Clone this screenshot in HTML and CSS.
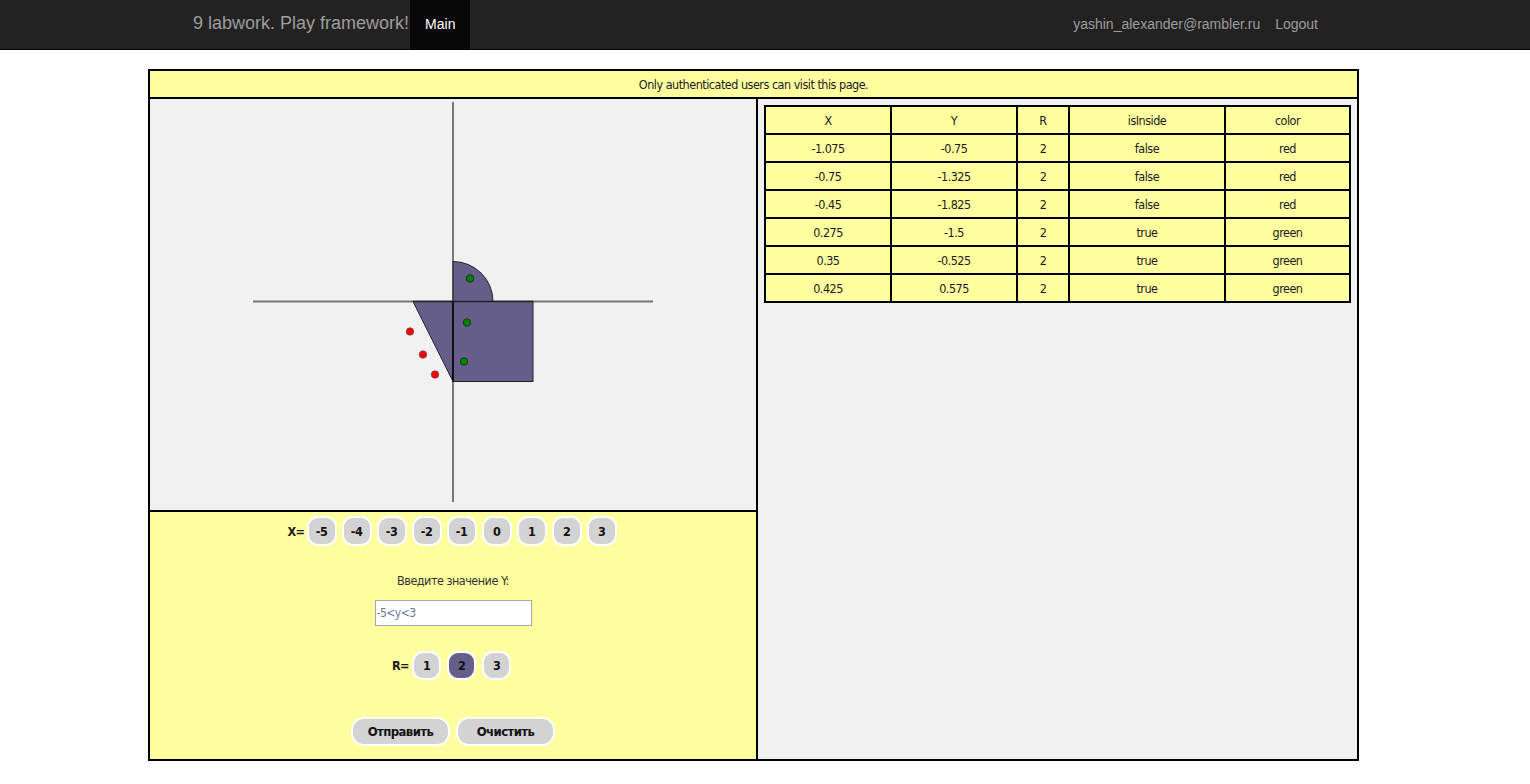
FILE: index.html
```html
<!DOCTYPE html>
<html lang="ru">
<head>
<meta charset="utf-8">
<title>9 labwork. Play framework!</title>
<link rel="stylesheet" href="styles.css">
</head>
<body>
<nav class="navbar">
  <div class="nav-inner">
    <div class="nav-left">
      <a class="brand" href="#">9 labwork. Play framework!</a>
      <a class="nav-link active" href="#">Main</a>
    </div>
    <div class="nav-right">
      <span class="nav-text">yashin_alexander@rambler.ru</span>
      <a class="nav-text logout" href="#">Logout</a>
    </div>
  </div>
</nav>

<div class="frame">
  <div class="frame-head">Only authenticated users can visit this page.</div>
  <div class="frame-body">
    <div class="left-col">
      <div class="graph-area">
        <svg class="graph" width="400" height="400" viewBox="0 0 400 400">
          <line x1="0" y1="199.5" x2="400" y2="199.5" stroke="#777" stroke-width="2"/>
          <line x1="200" y1="0" x2="200" y2="400" stroke="#777" stroke-width="2"/>
          <path d="M200 199.5 L200 159.5 A40 40 0 0 1 240 199.5 Z" fill="#665e8a" stroke="#222" stroke-width="1"/>
          <rect x="200" y="199.5" width="80" height="80" fill="#665e8a" stroke="#222" stroke-width="1"/>
          <path d="M160 199.5 L200 199.5 L200 279.5 Z" fill="#665e8a" stroke="#222" stroke-width="1"/>
          <line x1="160" y1="199.5" x2="280" y2="199.5" stroke="#222" stroke-width="1.5"/>
          <line x1="200" y1="199.5" x2="200" y2="279.5" stroke="#111" stroke-width="2"/>
          <circle cx="157" cy="229.5" r="3.8" fill="#ff0000" stroke="#555" stroke-width="0.6"/>
          <circle cx="170" cy="252.5" r="3.8" fill="#ff0000" stroke="#555" stroke-width="0.6"/>
          <circle cx="182" cy="272.5" r="3.8" fill="#ff0000" stroke="#555" stroke-width="0.6"/>
          <circle cx="211" cy="259.5" r="3.8" fill="#008000" stroke="#222" stroke-width="0.8"/>
          <circle cx="214" cy="220.5" r="3.8" fill="#008000" stroke="#222" stroke-width="0.8"/>
          <circle cx="217" cy="176.5" r="3.8" fill="#008000" stroke="#222" stroke-width="0.8"/>
        </svg>
      </div>
      <div class="form-area">
        <div class="btn-row x-row">
          <span class="lbl">X=</span>
          <button class="pill">-5</button>
          <button class="pill">-4</button>
          <button class="pill">-3</button>
          <button class="pill">-2</button>
          <button class="pill">-1</button>
          <button class="pill">0</button>
          <button class="pill">1</button>
          <button class="pill">2</button>
          <button class="pill">3</button>
        </div>
        <div class="y-label">Введите значение Y:</div>
        <input class="y-input" type="text" placeholder="-5&lt;y&lt;3">
        <div class="btn-row r-row">
          <span class="lbl">R=</span>
          <button class="pill">1</button>
          <button class="pill selected">2</button>
          <button class="pill">3</button>
        </div>
        <div class="action-row">
          <button class="action">Отправить</button>
          <button class="action">Очистить</button>
        </div>
      </div>
    </div>
    <div class="right-col">
      <table class="results">
        <colgroup>
          <col class="c-x"><col class="c-y"><col class="c-r"><col class="c-in"><col class="c-color">
        </colgroup>
        <tr><td>X</td><td>Y</td><td>R</td><td>isInside</td><td>color</td></tr>
        <tr><td>-1.075</td><td>-0.75</td><td>2</td><td>false</td><td>red</td></tr>
        <tr><td>-0.75</td><td>-1.325</td><td>2</td><td>false</td><td>red</td></tr>
        <tr><td>-0.45</td><td>-1.825</td><td>2</td><td>false</td><td>red</td></tr>
        <tr><td>0.275</td><td>-1.5</td><td>2</td><td>true</td><td>green</td></tr>
        <tr><td>0.35</td><td>-0.525</td><td>2</td><td>true</td><td>green</td></tr>
        <tr><td>0.425</td><td>0.575</td><td>2</td><td>true</td><td>green</td></tr>
      </table>
    </div>
  </div>
</div>
</body>
</html>
```

FILE: styles.css
```css
* { box-sizing: border-box; }
html, body { margin: 0; padding: 0; background: #fff; }
body {
  font-family: "DejaVu Sans Condensed", "Liberation Sans", sans-serif;
  font-size: 12.5px;
  letter-spacing: -0.5px;
  color: #1a1a1a;
}
a { text-decoration: none; }

.navbar {
  background: #222;
  border-bottom: 1px solid #080808;
  height: 50px;
  font-family: "Liberation Sans", Arial, sans-serif;
  letter-spacing: 0;
}
.nav-inner {
  width: 1170px;
  margin: 0 auto;
  height: 49px;
  display: flex;
  justify-content: space-between;
  align-items: stretch;
}
.nav-left, .nav-right { display: flex; align-items: stretch; }
.brand {
  color: #9d9d9d;
  font-size: 18px;
  padding: 0 1px 2px 13px;
  display: flex;
  align-items: center;
}
.nav-link {
  color: #9d9d9d;
  font-size: 14px;
  padding: 0 15px 2px;
  display: flex;
  align-items: center;
}
.nav-link.active { background: #080808; color: #fff; }
.nav-right { padding-right: 32px; }
.nav-text {
  color: #9d9d9d;
  font-size: 14px;
  display: flex;
  align-items: center;
  padding-bottom: 2px;
}
.logout { margin-left: 15px; }

.frame {
  margin: 19px 0 0 148px;
  width: 1211px;
  border: 2px solid #000;
}
.frame-head {
  background: #ffffa0;
  height: 28px;
  border-bottom: 2px solid #000;
  display: flex;
  align-items: center;
  justify-content: center;
  padding-top: 1px;
}
.frame-body { display: flex; }
.left-col {
  width: 608px;
  flex-shrink: 0;
  border-right: 2px solid #000;
  display: flex;
  flex-direction: column;
}
.graph-area {
  background: #f1f1f1;
  height: 413px;
  border-bottom: 2px solid #000;
  display: flex;
  justify-content: center;
  padding-top: 3px;
}
.graph { display: block; }

.form-area {
  background: #ffffa0;
  height: 247px;
  display: flex;
  flex-direction: column;
  align-items: center;
  padding-top: 4px;
}
.btn-row { display: flex; align-items: center; gap: 5px; }
.x-row { margin-left: -2px; }
.x-row .lbl { margin-right: -3px; }
.lbl { font-weight: bold; font-size: 12.5px; }
.pill {
  width: 30px;
  height: 30px;
  border: 2px solid #fff;
  border-radius: 11px;
  background: #d3d3d3;
  font-family: inherit;
  font-weight: bold;
  font-size: 12.5px;
  letter-spacing: -0.5px;
  color: #111;
  padding: 0;
  display: flex;
  align-items: center;
  justify-content: center;
}
.pill.selected { background: #665e8a; }
.y-label { margin-top: 27px; color: #333; }
.y-input {
  margin-top: 12px;
  width: 157px;
  height: 26px;
  border: 1px solid #a9a9a9;
  background: #fff;
  font-family: inherit;
  font-size: 12px;
  letter-spacing: -0.5px;
  padding: 0 1px;
}
.y-input::placeholder { color: #6a7a99; }
.r-row { margin-top: 25px; gap: 6px; margin-left: -3px; }
.r-row .pill { width: 29px; height: 29px; }
.r-row .lbl { margin-right: -3px; }
.action-row { margin-top: 37px; display: flex; gap: 6px; }
.action {
  width: 99px;
  height: 29px;
  border: 2px solid #fff;
  border-radius: 13px;
  background: #d3d3d3;
  font-family: inherit;
  font-weight: bold;
  font-size: 13px;
  letter-spacing: -0.6px;
  color: #111;
  padding: 0;
}

.right-col {
  flex: 1;
  background: #f1f1f1;
  padding: 6px 6px 0 6px;
}
.results {
  border-collapse: collapse;
  width: 585px;
  background: #ffffa0;
  table-layout: fixed;
}
.results td {
  border: 2px solid #000;
  height: 28px;
  text-align: center;
  padding: 0;
}
.c-x { width: 126px; }
.c-y { width: 126px; }
.c-r { width: 52px; }
.c-in { width: 156px; }
.c-color { width: 125px; }
```
